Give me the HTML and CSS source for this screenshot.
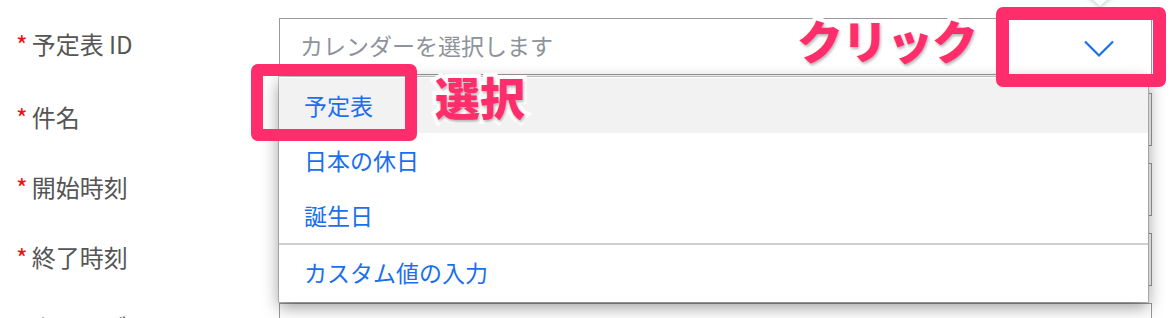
FILE: index.html
```html
<!DOCTYPE html>
<html lang="ja">
<head>
<meta charset="utf-8">
<link rel="stylesheet" href="styles.css">
</head>
<body>
<div class="page">
  <div class="form">
    <div class="row first">
      <div class="label"><span class="req">*</span>予定表 ID</div>
      <div class="select">
        <span class="placeholder">カレンダーを選択します</span>
        <svg class="chev" width="32" height="18" viewBox="0 0 32 18"><path d="M2 1.5 L16 15.5 L30 1.5" fill="none" stroke="#1a6ff0" stroke-width="2.2"/></svg>
      </div>
    </div>
    <div class="row">
      <div class="label"><span class="req">*</span>件名</div>
      <div class="input"></div>
    </div>
    <div class="row">
      <div class="label"><span class="req">*</span>開始時刻</div>
      <div class="input"></div>
    </div>
    <div class="row">
      <div class="label"><span class="req">*</span>終了時刻</div>
      <div class="input"></div>
    </div>
    <div class="row">
      <div class="label"><span class="req">*</span>タイムゾーン</div>
      <div class="input"></div>
    </div>
  </div>

  <div class="menu">
    <div class="item active">予定表</div>
    <div class="item">日本の休日</div>
    <div class="item">誕生日</div>
    <div class="sep"></div>
    <div class="item">カスタム値の入力</div>
  </div>

  <div class="pointer"></div>
  <div class="mark mark-select"></div>
  <div class="mark mark-click"></div>
  <div class="note note-select">選択</div>
  <div class="note note-click">クリック</div>
</div>
</body>
</html>
```

FILE: styles.css
```css
html, body {
  margin: 0;
  padding: 0;
  background: #fff;
  overflow: hidden;
}
body {
  font-family: "Noto Sans CJK JP", "Noto Sans", sans-serif;
  width: 1172px;
  height: 318px;
}
.page {
  position: relative;
  width: 1172px;
  height: 318px;
  overflow: hidden;
}
.form {
  display: flex;
  flex-direction: column;
  gap: 17px;
  padding-top: 18px;
}
.row {
  display: grid;
  grid-template-columns: 279px 873px;
  height: 53px;
  align-items: center;
}
.row.first {
  height: 57px;
  margin-bottom: 1px;
}
.label {
  padding-left: 16px;
  padding-bottom: 6px;
  font-size: 24px;
  line-height: 1;
  color: #555;
  white-space: nowrap;
}
.req {
  color: #ee1111;
  font-size: 25px;
  margin-right: 4px;
  position: relative;
  top: 1px;
}
.select, .input {
  box-sizing: border-box;
  height: 100%;
  border: 1.5px solid #9a9a9a;
  background: #fff;
}
.select {
  display: flex;
  align-items: center;
  justify-content: space-between;
  padding: 0 36px 0 20px;
}
.placeholder {
  font-size: 23px;
  line-height: 1;
  color: #8d939b;
  padding-bottom: 2px;
}
.chev {
  margin-top: 4px;
}
.menu {
  position: absolute;
  left: 279px;
  top: 77px;
  width: 869px;
  background: #fff;
  box-shadow: 0 5px 16px rgba(0, 0, 0, 0.4), 0 0 0 1px #ccc;
  padding: 1px 0 2px;
}
.item {
  height: 55px;
  display: flex;
  align-items: center;
  padding-left: 25px;
  font-size: 23px;
  line-height: 1;
  color: #1a6ff0;
}
.item.active {
  background: #f2f2f2;
}
.sep {
  height: 2px;
  background: #cfcfcf;
}
.pointer {
  position: absolute;
  left: 1078px;
  top: -12px;
  width: 0;
  height: 0;
  border-left: 22px solid transparent;
  border-right: 22px solid transparent;
  border-top: 18px solid #fff;
  filter: drop-shadow(0 1px 2px rgba(0, 0, 0, 0.25));
}
.mark {
  position: absolute;
  box-sizing: border-box;
  border: 13px solid #ff2d6c;
  border-radius: 7px;
}
.mark-select {
  left: 251px;
  top: 64px;
  width: 166px;
  height: 77px;
  border-width: 12px;
}
.mark-click {
  left: 996px;
  top: 7px;
  width: 170px;
  height: 80px;
}
.note {
  position: absolute;
  font-weight: 900;
  color: #ff2d6c;
  line-height: 1;
  -webkit-text-stroke: 8px #fff;
  paint-order: stroke fill;
  text-shadow: 1px 2px 3px rgba(0, 0, 0, 0.3);
  white-space: nowrap;
}
.note-select {
  left: 435px;
  top: 74px;
  font-size: 45px;
}
.note-click {
  left: 797px;
  top: 16px;
  font-size: 46px;
  letter-spacing: -1px;
}
```
